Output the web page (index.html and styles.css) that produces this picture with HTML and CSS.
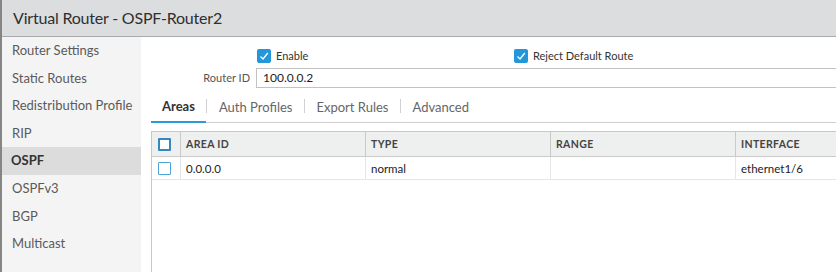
FILE: index.html
```html
<!DOCTYPE html>
<html>
<head>
<meta charset="utf-8">
<link rel="stylesheet" href="styles.css">
</head>
<body>
<div class="frame">
  <div class="titlebar">Virtual Router - OSPF-Router2</div>
  <div class="main">
    <nav class="sidebar">
      <div class="nav-item">Router Settings</div>
      <div class="nav-item">Static Routes</div>
      <div class="nav-item">Redistribution Profile</div>
      <div class="nav-item">RIP</div>
      <div class="nav-item active">OSPF</div>
      <div class="nav-item">OSPFv3</div>
      <div class="nav-item">BGP</div>
      <div class="nav-item">Multicast</div>
    </nav>
    <section class="content">
      <div class="form-grid">
        <div class="checks">
          <label class="check-item check-enable"><span class="cb checked"><svg viewBox="0 0 14 14"><path d="M3.5 7.5 L6 10 L10.8 4" fill="none" stroke="#fff" stroke-width="1.3"/></svg></span>Enable</label>
          <label class="check-item check-reject"><span class="cb checked"><svg viewBox="0 0 14 14"><path d="M3.5 7.5 L6 10 L10.8 4" fill="none" stroke="#fff" stroke-width="1.3"/></svg></span>Reject Default Route</label>
        </div>
        <div class="field-label">Router ID</div>
        <div class="field-input">100.0.0.2</div>
      </div>
      <div class="tabs">
        <div class="tab active">Areas</div>
        <span class="sep"></span>
        <div class="tab">Auth Profiles</div>
        <span class="sep"></span>
        <div class="tab">Export Rules</div>
        <span class="sep"></span>
        <div class="tab">Advanced</div>
      </div>
      <div class="table">
        <div class="row head">
          <div class="cell cbcell"><span class="box dark"></span></div>
          <div class="cell">AREA ID</div>
          <div class="cell">TYPE</div>
          <div class="cell">RANGE</div>
          <div class="cell">INTERFACE</div>
        </div>
        <div class="row data">
          <div class="cell cbcell"><span class="box"></span></div>
          <div class="cell">0.0.0.0</div>
          <div class="cell">normal</div>
          <div class="cell"></div>
          <div class="cell">ethernet1/6</div>
        </div>
      </div>
    </section>
  </div>
</div>
</body>
</html>
```
FILE: styles.css
```css
* { box-sizing: border-box; }
html, body {
  margin: 0;
  padding: 0;
  width: 836px;
  height: 272px;
  overflow: hidden;
  background: #fff;
  font-family: Lato, "Noto Sans", sans-serif;
}
.frame {
  height: 272px;
  border-left: 2px solid #858585;
  display: flex;
  flex-direction: column;
}
.titlebar {
  height: 37px;
  background: #dcdddf;
  border-bottom: 1px solid #a9aaac;
  color: #2f2f2f;
  font-size: 16px;
  letter-spacing: -0.2px;
  line-height: 36px;
  padding-left: 11px;
  flex-shrink: 0;
}
.main {
  flex: 1;
  display: flex;
  min-height: 0;
}
.sidebar {
  width: 139px;
  flex-shrink: 0;
  background: #f4f4f4;
}
.nav-item {
  height: 27.6px;
  line-height: 27.6px;
  padding-left: 10px;
  font-size: 13px;
  color: #5a5a5a;
  white-space: nowrap;
}
.nav-item.active {
  background: #dcdcdc;
  color: #333;
  font-weight: bold;
  padding-left: 9px;
}
.content {
  flex: 1;
  min-width: 0;
  overflow: hidden;
}
.form-grid {
  display: grid;
  grid-template-columns: 115px 1fr;
  column-gap: 0;
}
.checks {
  grid-column: 2;
  display: flex;
  height: 31px;
  padding-top: 12px;
  padding-left: 1px;
}
.check-item {
  display: flex;
  align-items: flex-start;
  font-size: 11px;
  color: #333;
  line-height: 14px;
}
.check-enable { width: 257px; }
.cb {
  width: 14px;
  height: 14px;
  border-radius: 2px;
  margin-right: 5px;
  display: block;
}
.cb.checked { background: #2497db; }
.cb svg { display: block; width: 14px; height: 14px; }
.field-label {
  grid-column: 1;
  text-align: right;
  padding-right: 6px;
  font-size: 11px;
  color: #555;
  line-height: 20px;
  height: 20px;
}
.field-input {
  grid-column: 2;
  height: 20px;
  border: 1px solid #c2c2c2;
  border-right: none;
  font-size: 12px;
  color: #222;
  line-height: 18px;
  padding-left: 6px;
}
.tabs {
  display: flex;
  align-items: center;
  margin: 0 0 0 10px;
  height: 35px;
  border-bottom: 1px solid #cfcfcf;
}
.tab {
  height: 35px;
  line-height: 35px;
  padding: 0 11px;
  font-size: 13px;
  color: #666;
  margin-bottom: -1px;
  padding-top: 2px;
}
.tab.active {
  color: #333;
  font-weight: bold;
  border-bottom: 2px solid #2a9ada;
  line-height: 32px;
}
.sep {
  width: 1px;
  height: 14px;
  margin: 2px 0.5px 0;
  background: #d0d0d0;
  flex-shrink: 0;
}
.table {
  margin: 8px 0 0 10px;
  width: 800px;
  height: 160px;
  border-left: 1px solid #c8c8c8;
  border-top: 1px solid #c8c8c8;
}
.row {
  display: grid;
  grid-template-columns: 28px 185px 185px 185px 185px;
}
.row.head {
  height: 25px;
  background: #eeefef;
  border-bottom: 1px solid #cbcbcb;
}
.row.data {
  height: 23px;
  border-bottom: 1px solid #e6e6e6;
}
.cell {
  padding-left: 5px;
  display: flex;
  align-items: center;
  font-size: 11.5px;
  color: #222;
  white-space: nowrap;
}
.head .cell {
  font-size: 10.5px;
  font-weight: bold;
  color: #444;
  letter-spacing: 0.35px;
}
.head .cell + .cell { border-left: 1px solid #c9c9c9; }
.data .cell + .cell { border-left: 1px solid #e6e6e6; }
.cbcell { padding-left: 6px; }
.box {
  width: 13px;
  height: 13px;
  border: 1.5px solid #4ea3d7;
  border-radius: 1px;
  background: #fff;
  display: block;
}
.box.dark { border: 2px solid #3487bf; }
```
